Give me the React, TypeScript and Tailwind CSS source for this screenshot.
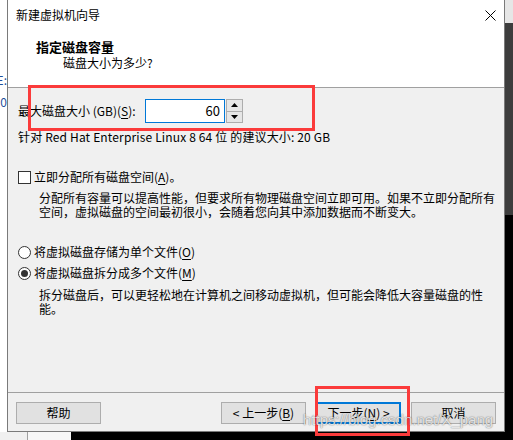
import React from "react";

function Btn({ children, focused }: { children: React.ReactNode; focused?: boolean }) {
  return (
    <div
      className={
        focused
          ? "w-[85px] h-[22px] flex items-center justify-center bg-[#e1e1e1] text-[12px] leading-[16px] text-black border-2 border-[#0078d7]"
          : "w-[85px] h-[22px] flex items-center justify-center bg-[#e1e1e1] text-[12px] leading-[16px] text-black border border-[#adadad]"
      }
    >
      {children}
    </div>
  );
}

function U({ children }: { children: React.ReactNode }) {
  return <span className="underline underline-offset-2 decoration-1">{children}</span>;
}

export default function App() {
  return (
    <div className="relative w-[513px] h-[440px] overflow-hidden flex flex-col bg-white text-black font-['Noto_Sans_CJK_SC','Noto_Sans',sans-serif]">
      <div className="flex h-[432px]">
        {/* left strip of background window */}
        <div className="w-[7px] bg-white flex flex-col">
          <div className="h-[72px]" />
          <div className="flex justify-end overflow-hidden h-[16px] text-[12px] leading-[16px] text-[#1e4f9a]">
            <span className="whitespace-nowrap">E:</span>
          </div>
          <div className="h-[6px]" />
          <div className="flex justify-end overflow-hidden h-[16px] text-[12px] leading-[16px] text-[#1e4f9a]">
            <span className="whitespace-nowrap">0</span>
          </div>
          <div className="flex-1" />
        </div>

        {/* dialog */}
        <div className="w-[498px] border-x border-b border-[#7a7a7a] flex flex-col">
          {/* title bar */}
          <div className="h-[30px] bg-white flex items-center justify-between pl-[8px] pr-[8px]">
            <span className="text-[12px] leading-[16px]">新建虚拟机向导</span>
            <svg width="11" height="11" viewBox="0 0 11 11">
              <path d="M0.5 0.5 L10.5 10.5 M10.5 0.5 L0.5 10.5" stroke="#000" strokeWidth="1" fill="none" />
            </svg>
          </div>
          {/* header */}
          <div className="h-[57px] bg-white pl-[28px] pt-[9px]">
            <div className="text-[13px] leading-[16px] font-bold">指定磁盘容量</div>
            <div className="text-[12px] leading-[16px] ml-[27px]">磁盘大小为多少?</div>
          </div>
          <div className="h-px bg-[#a0a0a0]" />
          {/* body */}
          <div className="h-[304px] bg-[#f0f0f0] px-[10px] pt-[11px] text-[12px]">
            <div className="h-[24px] flex items-center">
              <div className="w-[127px] leading-[16px] whitespace-nowrap">
                最大磁盘大小 (GB)(<U>S</U>):
              </div>
              <div className="w-[80px] h-[24px] bg-white border border-[#0078d7] flex items-center justify-end pr-[4px] text-[13px] leading-[16px]">
                60
              </div>
              <div className="ml-px w-[17px] h-[24px] border border-[#adadad] bg-[#e6e6e6] flex flex-col">
                <div className="flex-1 flex items-center justify-center border-b border-[#adadad]">
                  <svg width="7" height="4" viewBox="0 0 7 4">
                    <path d="M3.5 0 L7 4 L0 4 Z" fill="#000" />
                  </svg>
                </div>
                <div className="flex-1 flex items-center justify-center">
                  <svg width="7" height="4" viewBox="0 0 7 4">
                    <path d="M0 0 L7 0 L3.5 4 Z" fill="#000" />
                  </svg>
                </div>
              </div>
            </div>
            <div className="mt-[6px] leading-[16px] whitespace-nowrap tracking-[0.15px]">
              针对 Red Hat Enterprise Linux 8 64 位 的建议大小: 20 GB
            </div>

            <div className="mt-[24px] h-[16px] flex items-center">
              <div className="w-[13px] h-[13px] border border-[#333] bg-white" />
              <span className="ml-[3px] leading-[16px]">
                立即分配所有磁盘空间(<U>A</U>)。
              </span>
            </div>
            <div className="mt-[6px] pl-[21px] leading-[14px]">
              <div className="whitespace-nowrap">分配所有容量可以提高性能，但要求所有物理磁盘空间立即可用。如果不立即分配所有</div>
              <div className="whitespace-nowrap">空间，虚拟磁盘的空间最初很小，会随着您向其中添加数据而不断变大。</div>
            </div>

            <div className="mt-[25px] h-[16px] flex items-center">
              <div className="w-[13px] h-[13px] rounded-full border border-[#333] bg-white" />
              <span className="ml-[3px] leading-[16px]">
                将虚拟磁盘存储为单个文件(<U>O</U>)
              </span>
            </div>
            <div className="mt-[5px] h-[16px] flex items-center">
              <div className="w-[13px] h-[13px] rounded-full border border-[#333] bg-white flex items-center justify-center">
                <div className="w-[7px] h-[7px] rounded-full bg-[#333]" />
              </div>
              <span className="ml-[3px] leading-[16px]">
                将虚拟磁盘拆分成多个文件(<U>M</U>)
              </span>
            </div>
            <div className="mt-[7px] pl-[21px] leading-[14px]">
              <div className="whitespace-nowrap">拆分磁盘后，可以更轻松地在计算机之间移动虚拟机，但可能会降低大容量磁盘的性</div>
              <div className="whitespace-nowrap">能。</div>
            </div>
          </div>
          <div className="h-px bg-[#a0a0a0]" />
          {/* footer */}
          <div className="flex-1 bg-[#f0f0f0] px-[8px] pt-[9px] flex items-start">
            <Btn>帮助</Btn>
            <div className="ml-auto flex gap-[10px]">
              <Btn>
                &lt; 上一步(<U>B</U>)
              </Btn>
              <Btn focused>
                下一步(<U>N</U>) &gt;
              </Btn>
              <Btn>取消</Btn>
            </div>
          </div>
        </div>

        {/* right strip */}
        <div className="w-[8px] flex flex-col">
          <div className="h-[23px] bg-[#e6e6e6]" />
          <div className="h-[192px] bg-[#3d3d3d]" />
          <div className="flex-1 bg-black" />
        </div>
      </div>

      {/* bottom strip */}
      <div className="flex h-[8px]">
        <div className="w-[28px] bg-[#f0f0f0] border-r border-[#a0a0a0]" />
        <div className="w-[43px] bg-[#f7f7f7]" />
        <div className="flex-1 bg-black" />
      </div>

      {/* red highlight boxes */}
      <div className="absolute left-[28px] top-[85px] w-[287px] h-[46px] border-[3px] border-[#fb3b3b]" />
      <div className="absolute left-[315px] top-[386px] w-[95px] h-[50px] border-[3px] border-[#fb3b3b]" />

      {/* watermark */}
      <div className="absolute left-[303px] top-[410px] text-[15px] leading-[20px] text-white/80 whitespace-nowrap font-['Liberation_Sans',Arial,sans-serif] [text-shadow:0_0_1px_rgba(0,0,0,0.5),0_0_2px_rgba(0,0,0,0.25)]">
        https://blog.csdn.net/X_pang
      </div>
    </div>
  );
}
